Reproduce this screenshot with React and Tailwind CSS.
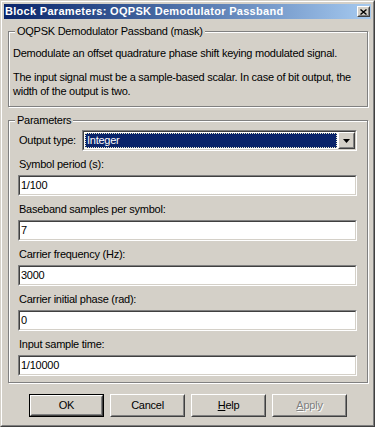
import React from "react";

const fields = [
  { label: "Symbol period (s):", value: "1/100" },
  { label: "Baseband samples per symbol:", value: "7" },
  { label: "Carrier frequency (Hz):", value: "3000" },
  { label: "Carrier initial phase (rad):", value: "0" },
  { label: "Input sample time:", value: "1/10000" },
];

function Raised({ children, className }) {
  return (
    <div className={"border border-t-white border-l-white border-r-[#404040] border-b-[#404040] bg-[#d4d0c8] " + (className || "")}>
      <div className="h-full border border-t-[#d4d0c8] border-l-[#d4d0c8] border-r-[#808080] border-b-[#808080] flex items-center justify-center">
        {children}
      </div>
    </div>
  );
}

function Sunken({ children, className }) {
  return (
    <div className={"border border-t-[#808080] border-l-[#808080] border-r-white border-b-white " + (className || "")}>
      <div className="h-full border border-t-[#404040] border-l-[#404040] border-r-[#d4d0c8] border-b-[#d4d0c8] bg-white">
        {children}
      </div>
    </div>
  );
}

function Field({ label, value }) {
  return (
    <div className="mt-[7px]">
      <div className="pl-[1px] leading-[13px] whitespace-nowrap">{label}</div>
      <Sunken className="mt-[4px] h-[21px]">
        <div className="pl-[1px] leading-[17px]">{value}</div>
      </Sunken>
    </div>
  );
}

function Button({ children, isDefault }) {
  if (isDefault) {
    return (
      <div className="w-[75px] h-[23px] border border-black">
        <Raised className="h-full">{children}</Raised>
      </div>
    );
  }
  return <Raised className="w-[75px] h-[23px]">{children}</Raised>;
}

function Group({ title, className, children }) {
  return (
    <div className={"relative border border-[#808080] shadow-[inset_1px_1px_0_#fff,1px_1px_0_#fff] " + className}>
      <span className="absolute -top-[7px] left-[6px] px-[2px] bg-[#d4d0c8] leading-[13px] whitespace-nowrap">{title}</span>
      {children}
    </div>
  );
}

export default function App() {
  return (
    <div className="w-[375px] h-[427px] bg-[#d4d0c8] border border-t-[#d4d0c8] border-l-[#d4d0c8] border-r-[#404040] border-b-[#404040] text-black text-[11px] tracking-[-0.25px] font-['Liberation_Sans',Arial,sans-serif]">
      <div className="h-full border border-t-white border-l-white border-r-[#808080] border-b-[#808080] p-[2px] flex flex-col">
        {/* title bar */}
        <div className="h-[15px] flex items-center bg-linear-to-r from-[#0a246a] to-[#a6caf0]">
          <span className="pl-[1px] text-white font-bold text-[11px] tracking-[0.3px] leading-[15px] whitespace-nowrap flex-1">
            Block Parameters: OQPSK Demodulator Passband
          </span>
          <Raised className="w-[13px] h-[11px] mr-[1px]">
            <svg width="7" height="6" viewBox="0 0 7 6">
              <path d="M0.5 0.5 L6.5 5.5 M6.5 0.5 L0.5 5.5" stroke="black" strokeWidth="1.4" fill="none" />
            </svg>
          </Raised>
        </div>

        <Group title="OQPSK Demodulator Passband (mask)" className="mt-[12px] ml-[4px] mr-[3px] h-[76px] pt-[14px] pl-[4px]">
          <p className="leading-[14px] whitespace-nowrap">Demodulate an offset quadrature phase shift keying modulated signal.</p>
          <p className="mt-[10px] leading-[14px] whitespace-nowrap">
            The input signal must be a sample-based scalar. In case of bit output, the
            <br />
            width of the output is two.
          </p>
        </Group>

        <Group title="Parameters" className="mt-[13px] ml-[4px] mr-[3px] h-[263px] pt-[9px] pl-[9px] pr-[10px]">
          <div className="flex items-center">
            <div className="w-[64px] pl-[1px] whitespace-nowrap">Output type:</div>
            <Sunken className="flex-1 h-[21px]">
              <div className="h-full flex">
                <div className="flex-1 p-[1px]">
                  <div className="h-full bg-[#0a246a] border border-dotted border-[#ecebc8] text-white leading-[13px] pl-[1px]">
                    Integer
                  </div>
                </div>
                <Raised className="w-[17px] h-full">
                  <svg width="7" height="4" viewBox="0 0 7 4">
                    <path d="M0 0 H7 L3.5 4 Z" fill="black" />
                  </svg>
                </Raised>
              </div>
            </Sunken>
          </div>
          {fields.map((f) => (
            <Field key={f.label} label={f.label} value={f.value} />
          ))}
        </Group>

        <div className="mt-[11px] ml-[25px] flex gap-[6px]">
          <Button isDefault>OK</Button>
          <Button>Cancel</Button>
          <Button>
            <span><span className="underline">H</span>elp</span>
          </Button>
          <Button>
            <span className="text-[#808080] [text-shadow:1px_1px_0_#fff]"><span className="underline">A</span>pply</span>
          </Button>
        </div>
      </div>
    </div>
  );
}
